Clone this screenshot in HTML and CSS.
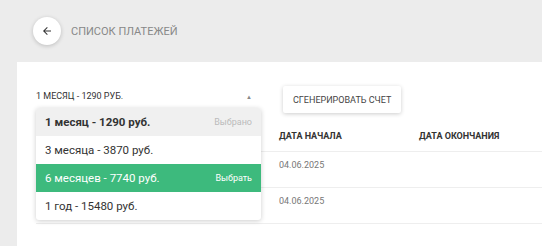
FILE: index.html
```html
<!DOCTYPE html>
<html>
  <head>
    <title>Список платежей</title>
    <link rel="stylesheet" href="styles.css">
  </head>
  <body>
    <div class="page-header">
      <button class="back-button">
        <svg width="12" height="12" viewBox="0 0 24 24">
          <path d="M20 11H7.83l5.59-5.59L12 4l-8 8 8 8 1.41-1.41L7.83 13H20v-2z" fill="#333"/>
        </svg>
      </button>
      <span class="page-title">Список платежей</span>
    </div>

    <div class="card">
      <div class="toolbar">
        <div class="plan-select">
          <div class="plan-label">
            <span>1 месяц - 1290 руб.</span>
            <span class="plan-arrow">▲</span>
          </div>
          <div class="plan-menu">
            <div class="plan-item selected">
              <span>1 месяц - 1290 руб.</span>
              <span class="plan-hint">Выбрано</span>
            </div>
            <div class="plan-item">
              <span>3 месяца - 3870 руб.</span>
            </div>
            <div class="plan-item active">
              <span>6 месяцев - 7740 руб.</span>
              <span class="plan-hint">Выбрать</span>
            </div>
            <div class="plan-item">
              <span>1 год - 15480 руб.</span>
            </div>
          </div>
        </div>
        <button class="generate-button">Сгенерировать счет</button>
      </div>

      <table class="payments">
        <tr>
          <th class="col-plan"></th>
          <th class="col-start">Дата начала</th>
          <th>Дата окончания</th>
        </tr>
        <tr>
          <td class="col-plan"></td>
          <td class="col-start">04.06.2025</td>
          <td></td>
        </tr>
        <tr>
          <td class="col-plan"></td>
          <td class="col-start">04.06.2025</td>
          <td></td>
        </tr>
      </table>
    </div>
  </body>
</html>
```

FILE: styles.css
```css
body {
  margin: 0;
  background: #ececec;
  font-family: Roboto, "Liberation Sans", sans-serif;
  overflow: hidden;
}
.page-header {
  display: flex;
  align-items: center;
  gap: 10px;
  padding: 16px 0 0 33px;
  height: 46px;
  box-sizing: border-box;
}
.back-button {
  width: 28px;
  height: 28px;
  border-radius: 50%;
  border: none;
  background: white;
  box-shadow: 0 1px 4px rgba(0, 0, 0, 0.2);
  display: flex;
  align-items: center;
  justify-content: center;
  padding: 0;
}
.page-title {
  font-size: 11px;
  color: #888;
  text-transform: uppercase;
}
.card {
  margin: 16px 0 0 17px;
  background: white;
  padding: 24px 0 23px 19px;
}
.toolbar {
  display: flex;
  gap: 22px;
  margin-bottom: 8px;
}
.plan-select {
  position: relative;
  width: 225px;
}
.plan-label {
  display: flex;
  justify-content: space-between;
  align-items: center;
  font-size: 9px;
  color: #333;
  text-transform: uppercase;
  margin-top: 5px;
  padding-right: 9px;
}
.plan-arrow {
  font-size: 6px;
  color: #888;
}
.plan-menu {
  position: absolute;
  top: 22px;
  left: 0;
  width: 225px;
  background: white;
  border-radius: 3px;
  box-shadow: 0 1px 5px rgba(0, 0, 0, 0.2);
  z-index: 10;
  overflow: hidden;
}
.plan-item {
  height: 28px;
  display: flex;
  justify-content: space-between;
  align-items: center;
  padding: 0 9px;
  font-size: 11.5px;
  color: #333;
}
.plan-item.selected {
  background: #f0f0f0;
  font-weight: bold;
}
.plan-item.active {
  background: #3dba7d;
  color: white;
}
.plan-hint {
  font-size: 9px;
  font-weight: normal;
  color: #bbb;
}
.plan-item.active .plan-hint {
  color: white;
}
.generate-button {
  height: 27px;
  padding: 0 10px;
  border: none;
  border-radius: 2px;
  background: white;
  box-shadow: 0 1px 4px rgba(0, 0, 0, 0.2);
  font-family: Roboto, "Liberation Sans", sans-serif;
  font-size: 9px;
  color: #444;
  text-transform: uppercase;
}
.payments {
  border-collapse: collapse;
  width: 520px;
}
.payments th {
  height: 30px;
  text-align: left;
  font-size: 9px;
  font-weight: bold;
  color: #333;
  text-transform: uppercase;
  padding: 0 0 0 19px;
  border-bottom: 1px solid #eee;
}
.payments td {
  height: 36px;
  box-sizing: border-box;
  vertical-align: top;
  padding: 8px 0 0 19px;
  font-size: 9px;
  color: #777;
  border-bottom: 1px solid #eee;
}
.payments .col-plan {
  width: 205px;
}
.payments .col-start {
  width: 121px;
}
```
